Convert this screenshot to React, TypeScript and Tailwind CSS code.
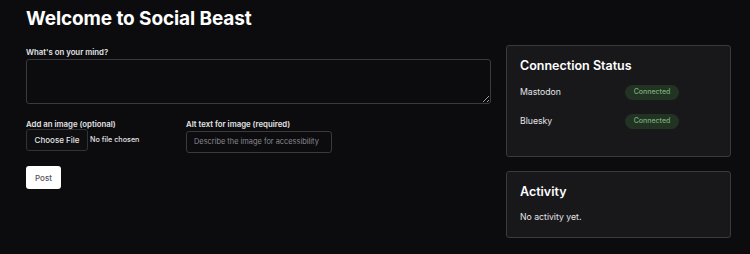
export default function App() {
  return (
    <div className="min-h-[254px] w-[750px] bg-[#0c0c0e] text-white" style={{ fontFamily: "Inter, 'Noto Sans', sans-serif" }}>
      <div className="flex gap-[15px] pl-[26px] pr-[19px] pt-[7px]">
        <div className="w-[465px]">
          <h1 className="text-[19px] font-bold leading-[23px] tracking-[-0.1px]">Welcome to Social Beast</h1>
          <div className="mt-[17px] text-[7.8px] font-semibold leading-[10px] text-[#e4e4e7]">What's on your mind?</div>
          <textarea className="mt-[2px] block h-[45px] w-[465px] resize-y rounded-[3px] border border-[#3a3a3e] bg-[#0c0c0e] outline-none" />
          <div className="mt-[15px] flex">
            <div className="w-[160px]">
              <div className="text-[7.8px] font-semibold leading-[10px] text-[#e4e4e7]">Add an image (optional)</div>
              <div className="flex items-center gap-[2px]">
                <span className="flex h-[22px] w-[62px] items-center justify-center rounded-[3px] border border-[#333336] bg-[#0e0e10] text-[8px] font-medium text-[#e4e4e7]">Choose File</span>
                <span className="whitespace-nowrap text-[7.2px] font-medium text-[#e4e4e7]">No file chosen</span>
              </div>
            </div>
            <div>
              <div className="text-[7.8px] font-semibold leading-[10px] text-[#e4e4e7]">Alt text for image (required)</div>
              <div className="mt-[2px] flex h-[22px] w-[146px] items-center whitespace-nowrap rounded-[3px] border border-[#3a3a3e] px-[7px] text-[7.4px] text-[#8a8a90]">Describe the image for accessibility</div>
            </div>
          </div>
          <button className="mt-[13px] flex h-[23px] w-[35px] items-center justify-center rounded-[3px] bg-white text-[8px] font-medium text-[#52525b]">Post</button>
        </div>
        <div className="flex w-[226px] flex-col gap-[14px] pt-[38px]">
          <div className="h-[112px] rounded-[3px] border border-[#3a3a3e] bg-[#18181b] px-[13px] pt-[12px]">
            <div className="text-[12.5px] font-semibold leading-[16px]">Connection Status</div>
            <div className="mt-[11px] flex items-center">
              <span className="w-[105px] text-[8.7px] text-[#e4e4e7]">Mastodon</span>
              <span className="flex h-[15px] w-[54px] items-center justify-center rounded-full bg-[#233323] text-[7px] font-medium text-[#78ad78]">Connected</span>
            </div>
            <div className="mt-[14px] flex items-center">
              <span className="w-[105px] text-[8.7px] text-[#e4e4e7]">Bluesky</span>
              <span className="flex h-[15px] w-[54px] items-center justify-center rounded-full bg-[#233323] text-[7px] font-medium text-[#78ad78]">Connected</span>
            </div>
          </div>
          <div className="h-[67px] rounded-[3px] border border-[#3a3a3e] bg-[#18181b] px-[13px] pt-[12px]">
            <div className="text-[12.5px] font-semibold leading-[16px]">Activity</div>
            <div className="mt-[12px] text-[8.7px] leading-[11px] text-[#e4e4e7]">No activity yet.</div>
          </div>
        </div>
      </div>
    </div>
  );
}
